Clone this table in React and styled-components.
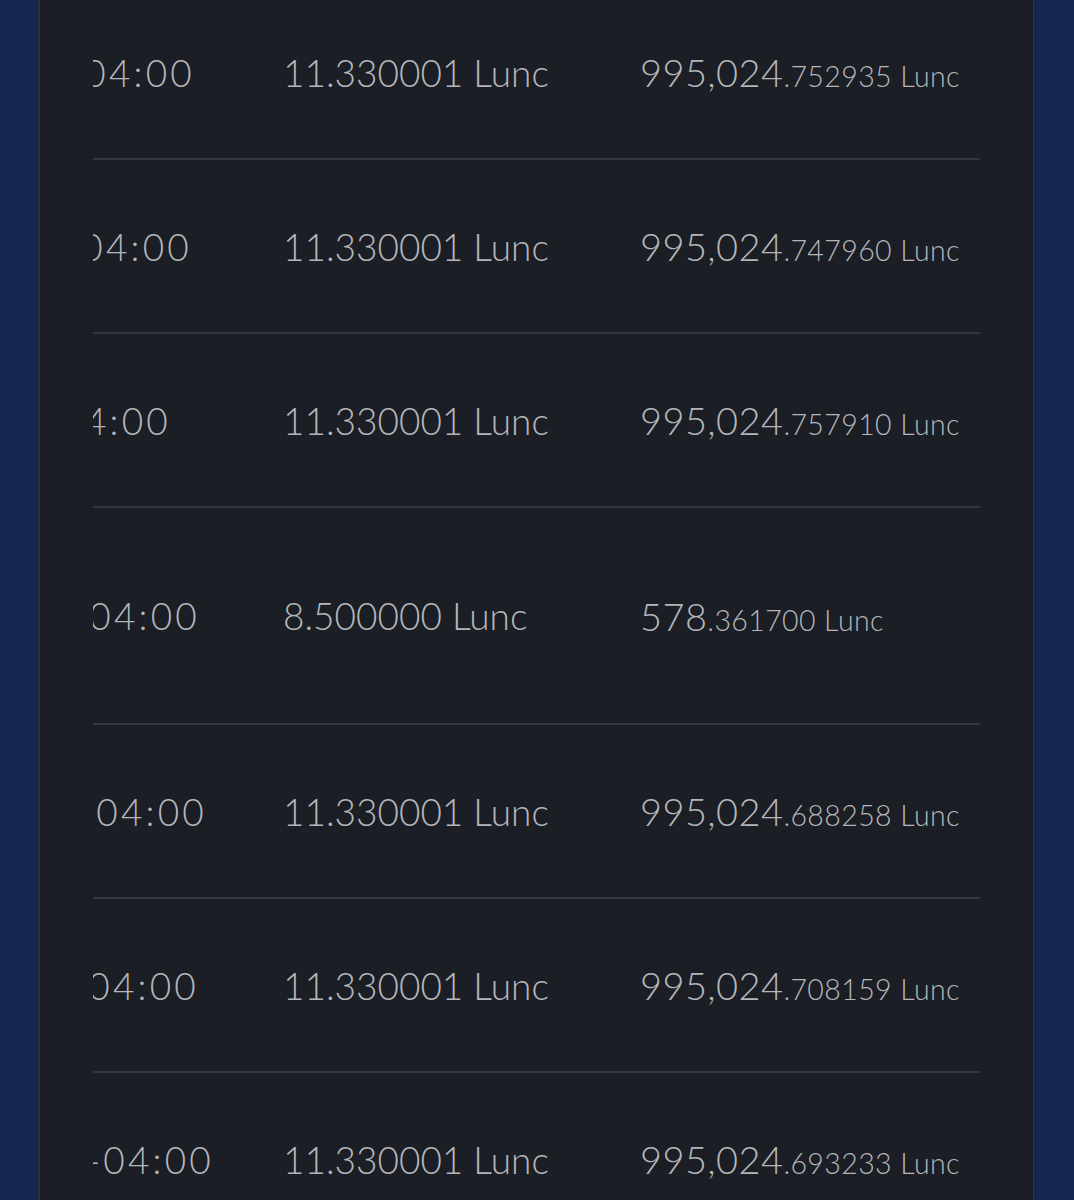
import React from 'react';
import styled, { createGlobalStyle } from 'styled-components';

const Global = createGlobalStyle`
  html, body {
    margin: 0;
    padding: 0;
    background: #16264f;
    font-family: Lato, "Open Sans", sans-serif;
  }
`;

const Page = styled.div`
  height: 1200px;
  overflow: hidden;
  padding: 0 40px 0 38px;
`;

const Panel = styled.div`
  height: 100%;
  background: #1b1e25;
  border-left: 2px solid #2c323c;
  border-right: 1px solid #30343a;
  padding: 0 53px;
  overflow: hidden;
`;

const List = styled.div`
  margin-top: -14px;
`;

const Row = styled.div`
  display: grid;
  grid-template-columns: 190px 357px 1fr;
  align-items: center;
  height: ${(p) => (p.tall ? 215 : 172)}px;
  border-bottom: 2px solid #33373e;
  color: #b5b6ba;
  font-weight: 300;
`;

const TimeCell = styled.div`
  overflow: hidden;
  display: flex;
  justify-content: flex-end;
  padding-right: ${(p) => p.shift}px;
  font-size: 37px;
  letter-spacing: 3.2px;
  white-space: nowrap;
`;

const Amount = styled.div`
  font-size: 37px;
  white-space: nowrap;
`;

const Balance = styled.div`
  white-space: nowrap;
  font-size: 38px;
  letter-spacing: 0.4px;
`;

const Fraction = styled.span`
  font-size: 28.5px;
`;

const rows = [
  { time: '2022-05-28T03:00:00-04:00', end: 192, amount: '11.330001', whole: '995,024', frac: '752935' },
  { time: '2022-05-28T02:00:00-04:00', end: 189, amount: '11.330001', whole: '995,024', frac: '747960' },
  { time: '2022-05-28T01:00:00-04:00', end: 168, amount: '11.330001', whole: '995,024', frac: '757910' },
  { time: '2022-05-28T00:00:00-04:00', end: 197, amount: '8.500000', whole: '578', frac: '361700', tall: true },
  { time: '2022-05-27T23:00:00-04:00', end: 204, amount: '11.330001', whole: '995,024', frac: '688258' },
  { time: '2022-05-27T22:00:00-04:00', end: 196, amount: '11.330001', whole: '995,024', frac: '708159' },
  { time: '2022-05-27T21:00:00-04:00', end: 211, amount: '11.330001', whole: '995,024', frac: '693233' },
];

export default function App() {
  return (
    <>
      <Global />
      <Page>
        <Panel>
          <List>
            {rows.map((r, i) => (
              <Row key={i} tall={r.tall}>
                <TimeCell shift={280 - r.end}>{r.time}</TimeCell>
                <Amount>{r.amount} Lunc</Amount>
                <Balance>
                  {r.whole}
                  <Fraction>.{r.frac} Lunc</Fraction>
                </Balance>
              </Row>
            ))}
          </List>
        </Panel>
      </Page>
    </>
  );
}
